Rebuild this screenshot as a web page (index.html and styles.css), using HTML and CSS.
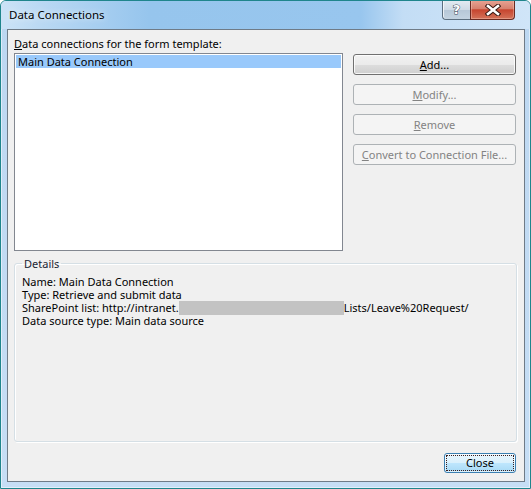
FILE: index.html
```html
<!DOCTYPE html>
<html lang="en">
<head>
    <meta charset="UTF-8">
    <meta name="viewport" content="width=device-width, initial-scale=1.0">
    <title>Data Connections</title>
    <link rel="stylesheet" href="styles.css">
</head>
<body>

    <div class="window">
        <div class="titlebar">
            <span class="title">Data Connections</span>
            <div class="caption-buttons">
                <span class="cap-btn help">?</span>
                <span class="cap-btn close">
                    <svg width="16" height="12" viewBox="0 0 16 12">
                        <path d="M3 2 L13 10 M13 2 L3 10" stroke="#3a1a14" stroke-width="4.6" stroke-linecap="square" fill="none"/>
                        <path d="M3 2 L13 10 M13 2 L3 10" stroke="#ffffff" stroke-width="2.6" stroke-linecap="square" fill="none"/>
                    </svg>
                </span>
            </div>
        </div>

        <div class="client">
            <div class="list-label"><u>D</u>ata connections for the form template:</div>

            <div class="main-row">
                <div class="listbox">
                    <div class="list-item selected">Main Data Connection</div>
                </div>
                <div class="side-buttons">
                    <button class="btn"><u>A</u>dd...</button>
                    <button class="btn" disabled><u>M</u>odify...</button>
                    <button class="btn" disabled><u>R</u>emove</button>
                    <button class="btn" disabled><u>C</u>onvert to Connection File...</button>
                </div>
            </div>

            <fieldset class="details">
                <legend>Details</legend>
                <div class="detail-line">Name: Main Data Connection</div>
                <div class="detail-line">Type: Retrieve and submit data</div>
                <div class="detail-line">SharePoint list: http://intranet.<span class="redacted"></span>Lists/Leave%20Request/</div>
                <div class="detail-line">Data source type: Main data source</div>
            </fieldset>

            <div class="footer">
                <button class="btn btn-focus"><span class="focus-rect">Close</span></button>
            </div>
        </div>
    </div>

</body>
</html>
```

FILE: styles.css
```css
body {
    margin: 0;
    font-family: "Noto Sans", "Open Sans", sans-serif;
    font-size: 11px;
    color: #000;
}
.window {
    width: 531px;
    height: 489px;
    box-sizing: border-box;
    border: 1px solid #1f858c;
    border-radius: 6px 6px 0 0;
    background: linear-gradient(to bottom, #bcd7f1, #c6def5);
    box-shadow: inset 0 0 0 1px rgba(255, 255, 255, 0.5);
    display: flex;
    flex-direction: column;
    overflow: hidden;
}
.titlebar {
    height: 28px;
    flex: none;
    display: flex;
    align-items: flex-start;
    background: linear-gradient(to right, #cce3f7 0%, #b9d8f3 8%, #96c5ed 28%, #98c6ee 68%, #c3ddf5 76%, #d0e5f8 100%);
}
.title {
    padding-left: 8px;
    line-height: 28px;
    font-size: 11.5px;
    color: #000;
    text-shadow: 0 0 6px rgba(255, 255, 255, 0.9);
}
.caption-buttons {
    margin-left: auto;
    margin-right: 15px;
    margin-top: -1px;
    display: flex;
}
.cap-btn {
    height: 20px;
    box-sizing: border-box;
    display: flex;
    align-items: center;
    justify-content: center;
    border: 1px solid #5c6f80;
    border-top: none;
}
.help {
    width: 28px;
    border-right: none;
    border-radius: 0 0 0 4px;
    background: linear-gradient(to bottom, #e4ecf3 0%, #cfdbe6 50%, #b6c7d7 51%, #c3d3e1 100%);
    box-shadow: inset 1px 0 0 rgba(255, 255, 255, 0.7);
    font-family: "DejaVu Sans", sans-serif;
    font-size: 13px;
    font-weight: bold;
    color: #fff;
    -webkit-text-stroke: 1px #3b4a58;
    paint-order: stroke fill;
}
.close {
    width: 45px;
    border-color: #6a2a22;
    border-radius: 0 0 4px 0;
    background: linear-gradient(to bottom, #e8a596 0%, #d7826f 45%, #c7452f 52%, #d4735a 100%);
    box-shadow: inset 0 0 0 1px rgba(255, 220, 210, 0.35);
}
.client {
    flex: 1;
    margin: 0 5px 6px 6px;
    border: 1px solid #6f7b87;
    background: #f0f0f0;
    padding: 5px 7px 8px 6px;
    display: flex;
    flex-direction: column;
}
.list-label {
    height: 17px;
    line-height: 17px;
    margin-bottom: 1px;
}
.main-row {
    height: 198px;
    display: flex;
    gap: 10px;
}
.listbox {
    width: 329px;
    box-sizing: border-box;
    border: 1px solid #828790;
    background: #fff;
    padding: 1px;
}
.list-item {
    height: 13px;
    line-height: 13px;
    padding-left: 2px;
}
.list-item.selected {
    background: #99c9fb;
}
.side-buttons {
    width: 163px;
    margin-top: 1px;
    display: flex;
    flex-direction: column;
    gap: 9px;
}
.btn {
    height: 21px;
    box-sizing: border-box;
    padding: 0;
    font-family: inherit;
    font-size: 11px;
    color: #000;
    border: 1px solid #707070;
    border-radius: 3px;
    background: linear-gradient(to bottom, #f2f2f2 0%, #ebebeb 50%, #dddddd 51%, #cfcfcf 100%);
    box-shadow: inset 0 0 0 1px rgba(255, 255, 255, 0.8);
}
.btn:disabled {
    color: #838383;
    border-color: #adb2b5;
    background: #f4f4f4;
    box-shadow: none;
}
.details {
    flex: 1;
    margin: 6px 0 0 0;
    min-width: 0;
    padding: 5px 8px 0 7px;
    border: 1px solid #d5dfe5;
    border-radius: 3px;
    box-shadow: inset 1px 1px 0 #fff, 1px 1px 0 #fff;
}
.details legend {
    padding: 0 2px;
    line-height: 13px;
    color: #1a2433;
}
.detail-line {
    line-height: 13px;
    white-space: nowrap;
}
.redacted {
    display: inline-block;
    width: 165px;
    height: 14px;
    margin-bottom: -2px;
    vertical-align: top;
    background: #c3c3c3;
}
.footer {
    margin-top: 11px;
    display: flex;
    justify-content: flex-end;
}
.btn-focus {
    width: 72px;
    height: 20px;
    margin-right: 1px;
    padding: 1px;
    border-color: #3c7fb1;
    background: linear-gradient(to bottom, #eaf6fd 0%, #d9f0fc 50%, #bee6fd 51%, #a7d9f5 100%);
    box-shadow: inset 0 0 0 1px rgba(255, 255, 255, 0.6);
}
.focus-rect {
    display: block;
    height: 100%;
    box-sizing: border-box;
    border: 1px dotted #3a1d1d;
    line-height: 14px;
}
```
